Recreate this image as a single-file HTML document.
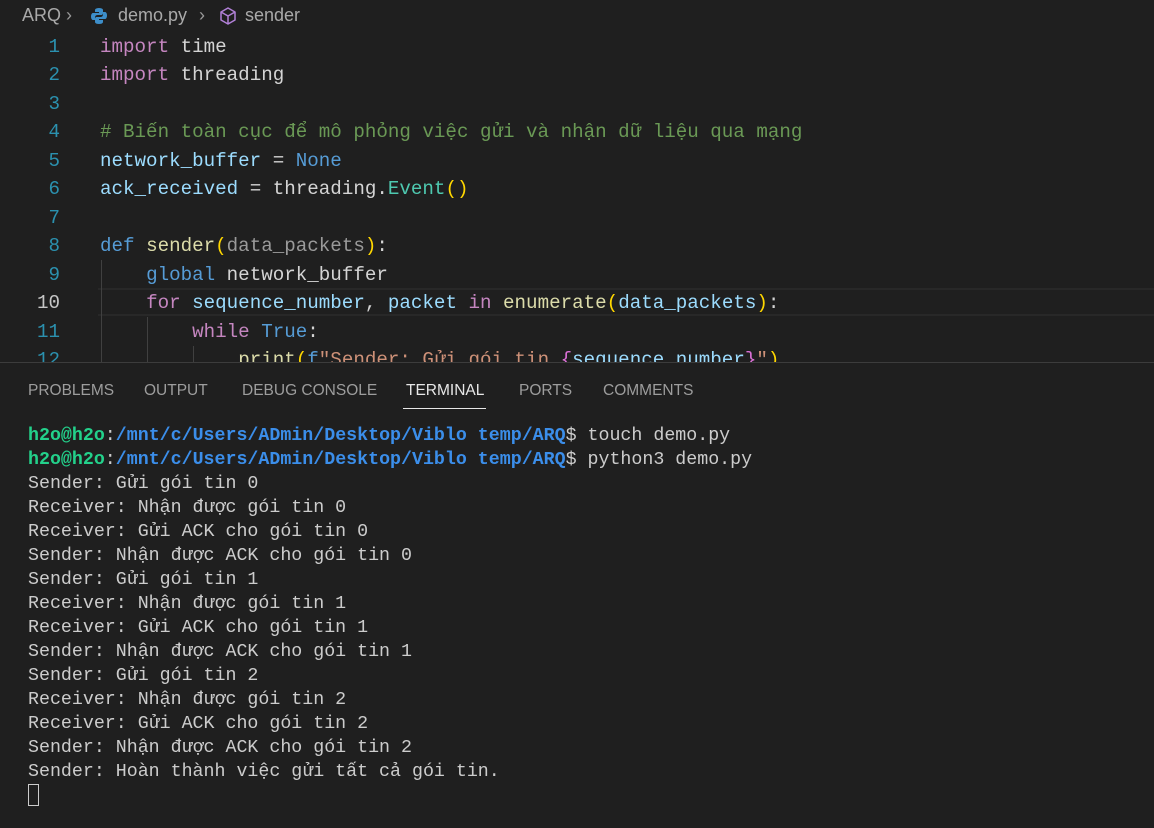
<!DOCTYPE html>
<html><head><meta charset="utf-8"><style>
html,body{margin:0;padding:0;background:#1f1f1f;width:1154px;height:828px;overflow:hidden;}
body{position:relative;font-family:"Liberation Sans","DejaVu Sans",sans-serif;}
.bc{position:absolute;top:5px;left:0;font-size:18px;color:#a9a9a9;white-space:nowrap;height:24px;width:400px;}
.bc span,.bc svg{position:absolute;}
.ed{position:absolute;top:33px;left:0;width:1154px;height:329px;overflow:hidden;font-family:"Liberation Mono","DejaVu Sans Mono",monospace;font-size:19.2px;}
.ln{position:absolute;left:0;width:60px;text-align:right;color:#2b91af;}
.cd{position:absolute;left:100px;white-space:pre;color:#d4d4d4;}
.k{color:#c586c0}.b{color:#569cd6}.f{color:#dcdcaa}.v{color:#9cdcfe}.c{color:#6a9955}.s{color:#ce9178}.y{color:#ffd700}.p{color:#da70d6}
.guide{position:absolute;width:1px;background:#404040;}
.hl{position:absolute;left:98px;right:0;top:255px;height:24px;border-top:2px solid #282828;border-bottom:2px solid #282828;}
.panel{position:absolute;top:362px;left:0;right:0;bottom:0;border-top:1px solid #3c3c3c;}
.tabs{position:absolute;top:19px;left:28px;font-size:15.5px;color:#9d9d9d;white-space:nowrap;}
.tabs span{position:absolute;}
.ul{position:absolute;top:45px;left:403px;width:83px;height:1px;background:#e7e7e7;}
.term{position:absolute;top:61px;left:28px;font-family:"Liberation Mono","DejaVu Sans Mono",monospace;font-size:18.3px;line-height:24px;color:#cccccc;white-space:pre;}
.g{color:#23d18b;font-weight:bold}.bl{color:#3b8eea;font-weight:bold}
.cur{display:inline-block;width:9px;height:20px;border:1px solid #ccc;vertical-align:-4px;}
</style></head><body>
<div class="bc"><span style="left:22px">ARQ</span><span style="left:66px;color:#999">&#x203A;</span>
<svg width="18" height="18" viewBox="0 0 18 18" style="left:90px;top:2px"><path d="M9 1C5 1 5 3 5 3v2h4v1H3S1 6 1 9.5 3 13 3 13h2v-2.5S5 8 7.5 8h4S13 8 13 6V3s0-2-4-2z" fill="#3d8ec9"/><path d="M9 17c4 0 4-2 4-2v-2H9v-1h6s2 0 2-3.5S15 5 15 5h-2v2.5S13 10 10.5 10h-4S5 10 5 12v3s0 2 4 2z" fill="#3d8ec9"/></svg><span style="left:118px">demo.py</span><span style="left:199px;color:#999">&#x203A;</span>
<svg width="20" height="20" viewBox="0 0 20 20" style="left:218px;top:1px"><path d="M10 2l7 4v8l-7 4-7-4V6z M3 6l7 4 7-4 M10 10v8" fill="none" stroke="#b180d7" stroke-width="1.5" stroke-linejoin="round"/></svg><span style="left:245px">sender</span></div>
<div class="ed">
<div class="hl"></div>
<div class="guide" style="left:101px;top:227px;height:110px"></div>
<div class="guide" style="left:147px;top:284px;height:50px"></div>
<div class="guide" style="left:193px;top:313px;height:30px"></div>
<div class="ln" style="top:3px">1</div><div class="cd" style="top:3px"><span class="k">import</span> time</div>
<div class="ln" style="top:31px">2</div><div class="cd" style="top:31px"><span class="k">import</span> threading</div>
<div class="ln" style="top:60px">3</div>
<div class="ln" style="top:88px">4</div><div class="cd c" style="top:88px"># Biến toàn cục để mô phỏng việc gửi và nhận dữ liệu qua mạng</div>
<div class="ln" style="top:117px">5</div><div class="cd" style="top:117px"><span class="v">network_buffer</span> = <span class="b">None</span></div>
<div class="ln" style="top:145px">6</div><div class="cd" style="top:145px"><span class="v">ack_received</span> = threading.<span style="color:#4ec9b0">Event</span><span class="y">()</span></div>
<div class="ln" style="top:174px">7</div>
<div class="ln" style="top:202px">8</div><div class="cd" style="top:202px"><span class="b">def</span> <span class="f">sender</span><span class="y">(</span><span style="color:#9a9a9a">data_packets</span><span class="y">)</span>:</div>
<div class="ln" style="top:231px">9</div><div class="cd" style="top:231px">    <span class="b">global</span> network_buffer</div>
<div class="ln" style="top:259px;color:#c6c6c6">10</div><div class="cd" style="top:259px">    <span class="k">for</span> <span class="v">sequence_number</span>, <span class="v">packet</span> <span class="k">in</span> <span class="f">enumerate</span><span class="y">(</span><span class="v">data_packets</span><span class="y">)</span>:</div>
<div class="ln" style="top:288px">11</div><div class="cd" style="top:288px">        <span class="k">while</span> <span class="b">True</span>:</div>
<div class="ln" style="top:316px">12</div><div class="cd" style="top:316px">            <span class="f">print</span><span class="y">(</span><span class="b">f</span><span class="s">"Sender: Gửi gói tin </span><span class="p">{</span><span class="v">sequence_number</span><span class="p">}</span><span class="s">"</span><span class="y">)</span></div>
</div>
<div class="panel">
<div class="tabs"><span style="left:0">PROBLEMS</span><span style="left:116px">OUTPUT</span><span style="left:214px">DEBUG CONSOLE</span><span style="left:378px;color:#e7e7e7">TERMINAL</span><span style="left:491px">PORTS</span><span style="left:575px">COMMENTS</span></div>
<div class="ul"></div>
<div class="term"><span class="g">h2o@h2o</span>:<span class="bl">/mnt/c/Users/ADmin/Desktop/Viblo temp/ARQ</span>$ touch demo.py
<span class="g">h2o@h2o</span>:<span class="bl">/mnt/c/Users/ADmin/Desktop/Viblo temp/ARQ</span>$ python3 demo.py
Sender: Gửi gói tin 0
Receiver: Nhận được gói tin 0
Receiver: Gửi ACK cho gói tin 0
Sender: Nhận được ACK cho gói tin 0
Sender: Gửi gói tin 1
Receiver: Nhận được gói tin 1
Receiver: Gửi ACK cho gói tin 1
Sender: Nhận được ACK cho gói tin 1
Sender: Gửi gói tin 2
Receiver: Nhận được gói tin 2
Receiver: Gửi ACK cho gói tin 2
Sender: Nhận được ACK cho gói tin 2
Sender: Hoàn thành việc gửi tất cả gói tin.
<span class="cur"></span></div>
</div>
</body></html>
